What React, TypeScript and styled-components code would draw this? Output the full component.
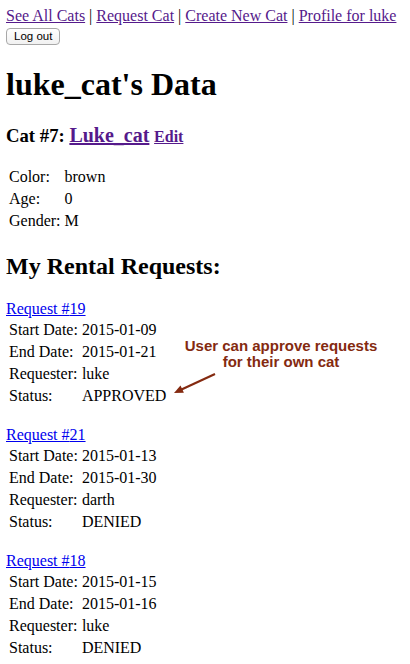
import styled, { createGlobalStyle } from 'styled-components';

const CAT = { id: 7, name: 'Luke_cat', color: 'brown', age: '0', gender: 'M' };

const REQUESTS = [
  { id: 19, start: '2015-01-09', end: '2015-01-21', requester: 'luke', status: 'APPROVED' },
  { id: 21, start: '2015-01-13', end: '2015-01-30', requester: 'darth', status: 'DENIED' },
  { id: 18, start: '2015-01-15', end: '2015-01-16', requester: 'luke', status: 'DENIED' },
];

const NAV = ['See All Cats', 'Request Cat', 'Create New Cat', 'Profile for luke'];

const GlobalStyle = createGlobalStyle`
  body {
    margin: 7px 6px 6px;
    font-family: 'Liberation Serif', 'Times New Roman', serif;
    font-size: 16px;
    color: #000;
    background: #fff;
  }
`;

export default function App() {
  return (
    <Page>
      <GlobalStyle />
      <Nav>
        {NAV.map((label, i) => (
          <span key={label}>
            {i > 0 && <Sep> | </Sep>}
            <Link href='#' $visited>
              {label}
            </Link>
          </span>
        ))}
      </Nav>
      <LogoutButton>Log out</LogoutButton>

      <Title>luke_cat's Data</Title>
      <CatHeading>
        Cat #{CAT.id}: <CatName href='#'>{CAT.name}</CatName>{' '}
        <EditLink href='#'>Edit</EditLink>
      </CatHeading>
      <DataTable>
        <tbody>
          <tr>
            <td>Color:</td>
            <td>{CAT.color}</td>
          </tr>
          <tr>
            <td>Age:</td>
            <td>{CAT.age}</td>
          </tr>
          <tr>
            <td>Gender:</td>
            <td>{CAT.gender}</td>
          </tr>
        </tbody>
      </DataTable>

      <SectionTitle>My Rental Requests:</SectionTitle>
      {REQUESTS.map((req) => (
        <RequestBlock key={req.id}>
          <Link href='#'>Request #{req.id}</Link>
          <DataTable>
            <tbody>
              <tr>
                <td>Start Date:</td>
                <td>{req.start}</td>
              </tr>
              <tr>
                <td>End Date:</td>
                <td>{req.end}</td>
              </tr>
              <tr>
                <td>Requester:</td>
                <td>{req.requester}</td>
              </tr>
              <tr>
                <td>Status:</td>
                <td>{req.status}</td>
              </tr>
            </tbody>
          </DataTable>
        </RequestBlock>
      ))}

      <Callout>
        <CalloutText>
          User can approve requests
          <br />
          for their own cat
        </CalloutText>
        <CalloutArrow width='46' height='22' viewBox='0 0 46 22'>
          <line x1='43' y1='1' x2='9.5' y2='16.5' stroke='#842a10' strokeWidth='2.2' />
          <polygon points='2,20 8.5,12.6 11.9,19.8' fill='#842a10' />
        </CalloutArrow>
      </Callout>
    </Page>
  );
}

const Page = styled.div`
  position: relative;
`;

const Nav = styled.div`
  white-space: nowrap;
`;

const Sep = styled.span`
  color: #000;
`;

const Link = styled.a<{ $visited?: boolean }>`
  color: ${({ $visited }) => ($visited ? '#551a8b' : '#0000ee')};
  text-decoration: underline;
`;

const LogoutButton = styled.button`
  display: block;
  margin: 3px 0 0;
  height: 17px;
  padding: 0 7px;
  font-family: 'Liberation Sans', Arial, sans-serif;
  font-size: 11.5px;
  line-height: 15px;
  color: #000;
  background: linear-gradient(#ffffff, #f1f1f1);
  border: 1px solid #a8a8a8;
  border-radius: 4px;
`;

const Title = styled.h1`
  font-size: 32px;
  font-weight: bold;
  margin: 21px 0;
`;

const CatHeading = styled.h3`
  font-size: 18.72px;
  font-weight: bold;
  margin: 21px 0 18px;
`;

const CatName = styled.a`
  color: #551a8b;
  font-size: 20px;
`;

const EditLink = styled.a`
  color: #551a8b;
  font-size: 16px;
`;

const DataTable = styled.table`
  border-spacing: 2px;

  td {
    padding: 1px;
    vertical-align: middle;
  }
`;

const SectionTitle = styled.h2`
  font-size: 24px;
  font-weight: bold;
  margin: 20px 0;
`;

const RequestBlock = styled.div`
  margin-bottom: 18px;
`;

const Callout = styled.div`
  position: absolute;
  top: 331px;
  left: 160px;
  width: 230px;
`;

const CalloutText = styled.div`
  margin-left: 18px;
  width: 194px;
  text-align: center;
  white-space: nowrap;
  font-family: 'Liberation Sans', Arial, sans-serif;
  font-weight: bold;
  font-size: 15px;
  line-height: 16px;
  color: #842a10;
`;

const CalloutArrow = styled.svg`
  display: block;
  margin: 3px 0 0 6px;
`;
